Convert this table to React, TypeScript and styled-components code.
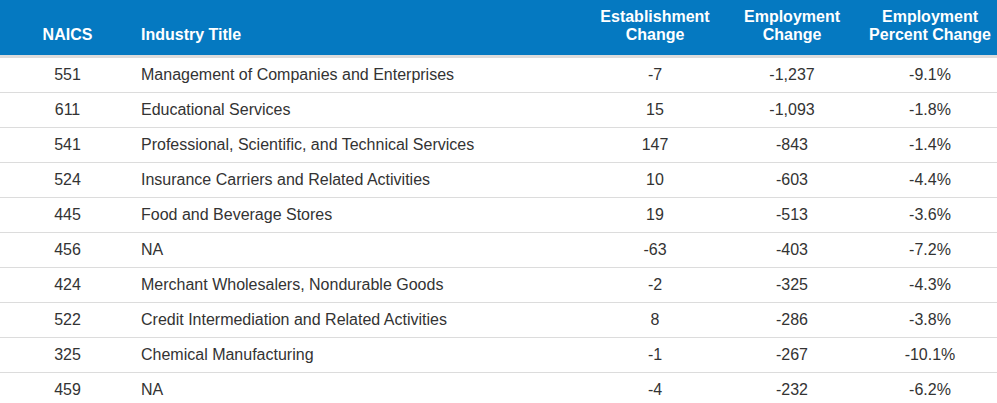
import React from 'react';
import styled, { createGlobalStyle } from 'styled-components';

const GlobalStyle = createGlobalStyle`
  body {
    margin: 0;
    background: #fff;
    font-family: "Liberation Sans", Arial, sans-serif;
  }
`;

const COLUMNS = '135px 454px 132px 142px 134px';

const Table = styled.div`
  width: 997px;
`;

const HeadRow = styled.div`
  display: grid;
  grid-template-columns: ${COLUMNS};
  height: 55px;
  background: #0579c1;
  border-bottom: 3px solid #dcdcdc;
  align-items: end;
`;

const HeadCell = styled.div<{ $left?: boolean }>`
  padding: 0 0 11px ${({ $left }) => ($left ? '6px' : '0')};
  color: #fff;
  font-size: 16px;
  font-weight: 700;
  line-height: 18px;
  white-space: nowrap;
  text-align: ${({ $left }) => ($left ? 'left' : 'center')};
`;

const Row = styled.div`
  display: grid;
  grid-template-columns: ${COLUMNS};
  height: 34px;
  border-bottom: 1px solid #dcdcdc;
  align-items: center;
`;

const Cell = styled.div<{ $left?: boolean }>`
  padding-left: ${({ $left }) => ($left ? '6px' : '0')};
  color: #333;
  font-size: 16px;
  line-height: 18px;
  white-space: nowrap;
  text-align: ${({ $left }) => ($left ? 'left' : 'center')};
`;

const rows = [
  ['551', 'Management of Companies and Enterprises', '-7', '-1,237', '-9.1%'],
  ['611', 'Educational Services', '15', '-1,093', '-1.8%'],
  ['541', 'Professional, Scientific, and Technical Services', '147', '-843', '-1.4%'],
  ['524', 'Insurance Carriers and Related Activities', '10', '-603', '-4.4%'],
  ['445', 'Food and Beverage Stores', '19', '-513', '-3.6%'],
  ['456', 'NA', '-63', '-403', '-7.2%'],
  ['424', 'Merchant Wholesalers, Nondurable Goods', '-2', '-325', '-4.3%'],
  ['522', 'Credit Intermediation and Related Activities', '8', '-286', '-3.8%'],
  ['325', 'Chemical Manufacturing', '-1', '-267', '-10.1%'],
  ['459', 'NA', '-4', '-232', '-6.2%'],
];

const App = () => (
  <>
    <GlobalStyle />
    <Table>
      <HeadRow>
        <HeadCell>NAICS</HeadCell>
        <HeadCell $left>Industry Title</HeadCell>
        <HeadCell>
          Establishment
          <br />
          Change
        </HeadCell>
        <HeadCell>
          Employment
          <br />
          Change
        </HeadCell>
        <HeadCell>
          Employment
          <br />
          Percent Change
        </HeadCell>
      </HeadRow>
      {rows.map(([naics, title, est, emp, pct]) => (
        <Row key={naics}>
          <Cell>{naics}</Cell>
          <Cell $left>{title}</Cell>
          <Cell>{est}</Cell>
          <Cell>{emp}</Cell>
          <Cell>{pct}</Cell>
        </Row>
      ))}
    </Table>
  </>
);

export default App;
